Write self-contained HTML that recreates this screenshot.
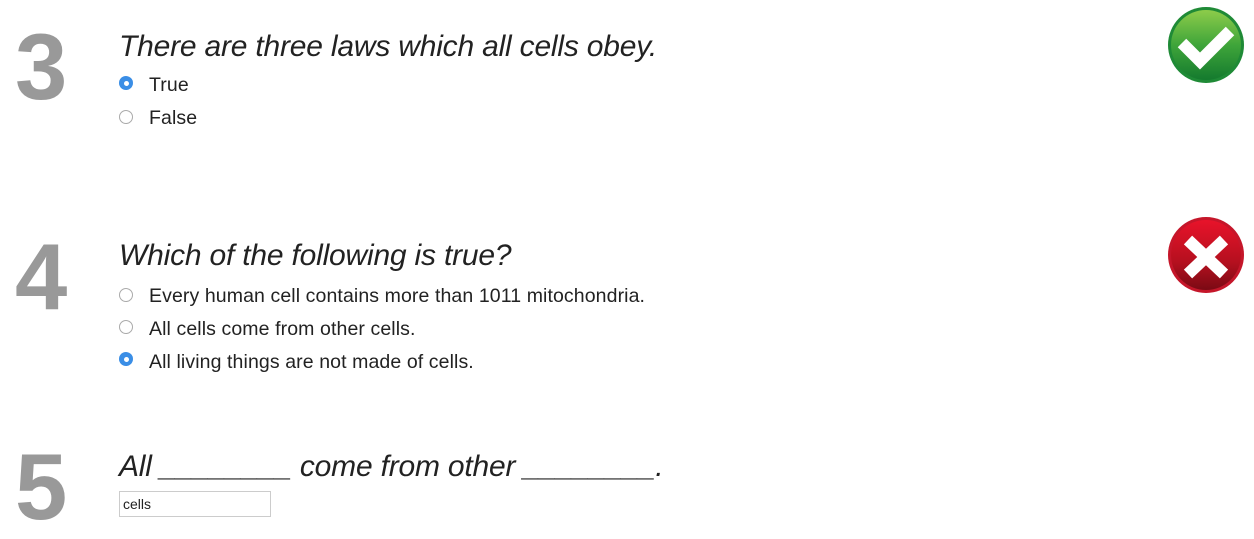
<!DOCTYPE html>
<html><head><style>
body{margin:0;background:#fff;width:1254px;height:535px;overflow:hidden;position:relative;font-family:"Liberation Sans",sans-serif;color:#222}
.num{position:absolute;left:15px;font-size:94px;font-weight:bold;color:#999;line-height:1}
.q{position:absolute;left:119px;font-size:30px;font-style:italic;line-height:1;white-space:nowrap;letter-spacing:-0.2px}
.opt{position:absolute;left:149px;font-size:19.5px;line-height:1;white-space:nowrap;letter-spacing:0.1px}
.r{position:absolute;left:119px;width:12px;height:12px;border:1px solid #aaa;border-radius:50%;background:#fff}
.r.on{border:none;width:14px;height:14px;background:#3a8ee6}
.r.on::after{content:"";position:absolute;left:4.5px;top:4.5px;width:5px;height:5px;border-radius:50%;background:#fff}
svg{position:absolute}
</style></head><body>
<div class="num" style="top:20px">3</div>
<div class="q" style="top:32px">There are three laws which all cells obey.</div>
<div class="r on" style="top:76px"></div><div class="opt" style="top:76px">True</div>
<div class="r" style="top:110px"></div><div class="opt" style="top:109px">False</div>

<div class="num" style="top:230px">4</div>
<div class="q" style="top:241px">Which of the following is true?</div>
<div class="r" style="top:288px"></div><div class="opt" style="top:287px">Every human cell contains more than 1011 mitochondria.</div>
<div class="r" style="top:320px"></div><div class="opt" style="top:320px">All cells come from other cells.</div>
<div class="r on" style="top:352px"></div><div class="opt" style="top:353px">All living things are not made of cells.</div>

<div class="num" style="top:440px">5</div>
<div class="q" style="top:452px">All ________ come from other ________.</div>
<div style="position:absolute;left:119px;top:491px;border:1px solid #ccc;font-size:14px;line-height:24px;padding-left:3px;box-sizing:border-box;width:152px;height:26px">cells</div>

<svg style="left:1166px;top:5px" width="82" height="82" viewBox="0 0 82 82">
<defs><linearGradient id="g" x1="0" y1="0" x2="0" y2="1"><stop offset="0" stop-color="#8dcc4a"/><stop offset="0.5" stop-color="#3fa53a"/><stop offset="1" stop-color="#147a2e"/></linearGradient></defs>
<circle cx="40" cy="40" r="38" fill="#1f8a36"/><circle cx="40" cy="40" r="35" fill="url(#g)"/>
<path d="M16 38 L34 56 L64 26" fill="none" stroke="#fff" stroke-width="12"/></svg>

<svg style="left:1166px;top:215px" width="82" height="82" viewBox="0 0 82 82">
<defs><linearGradient id="rd" x1="0" y1="0" x2="0" y2="1"><stop offset="0" stop-color="#e8132a"/><stop offset="0.6" stop-color="#b5101f"/><stop offset="1" stop-color="#7a0a14"/></linearGradient></defs>
<circle cx="40" cy="40" r="38" fill="#c5162a"/><circle cx="40" cy="40" r="35" fill="url(#rd)"/>
<path d="M22 25 L58 59 M58 25 L22 59" fill="none" stroke="#fff" stroke-width="12"/></svg>
</body></html>
